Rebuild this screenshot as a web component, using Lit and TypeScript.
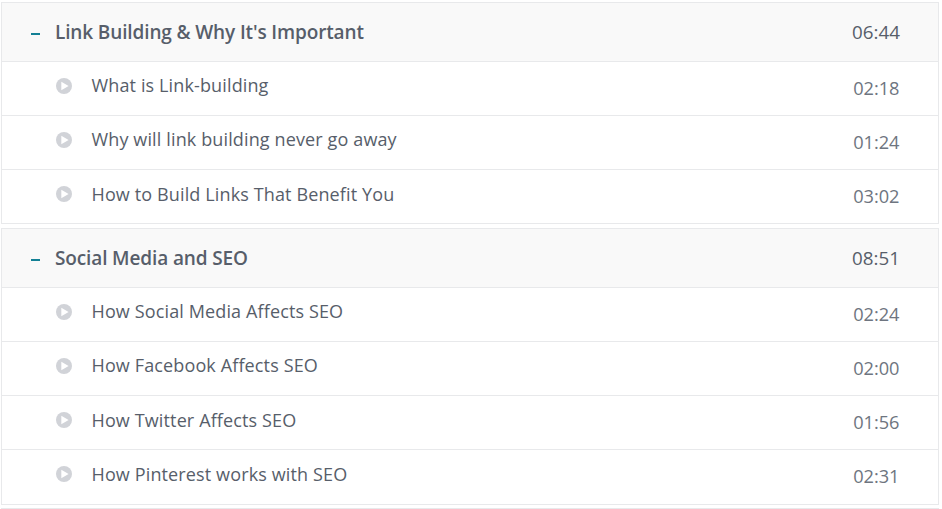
import { LitElement, html, css } from "lit";
import { customElement } from "lit/decorators.js";

const sections = [
  { title: "Link Building & Why It's Important", time: "06:44", items: [["What is Link-building", "02:18"], ["Why will link building never go away", "01:24"], ["How to Build Links That Benefit You", "03:02"]] },
  { title: "Social Media and SEO", time: "08:51", items: [["How Social Media Affects SEO", "02:24"], ["How Facebook Affects SEO", "02:00"], ["How Twitter Affects SEO", "01:56"], ["How Pinterest works with SEO", "02:31"]] },
];

@customElement("app-root")
export class AppRoot extends LitElement {
  static styles = css`
    :host { display: block; height: 509px; overflow: hidden; background: #fff; padding: 2px 3px 0 1px; box-sizing: border-box; font-family: "Open Sans", sans-serif; font-size: 18px; line-height: 24px; color: #575e6a; }
    .section { border: 1px solid #e8e9eb; margin-bottom: 4px; }
    .section:last-of-type { padding-bottom: 1px; margin-bottom: 3px; }
    .head, .row { display: flex; align-items: center; box-sizing: border-box; }
    .head { height: 58px; background: #f9f9f9; padding: 0 38px 0 29px; }
    .minus { width: 9px; height: 2px; background: #138095; margin: 3px 15px 0 0; }
    .title { flex: 1; white-space: nowrap; }
    .head .title { font-weight: 600; font-size: 19px; letter-spacing: -0.13px; }
    .head .time { font-weight: 400; font-size: 18.8px; }
    .row { height: 54px; border-top: 1px solid #e8e9eb; padding: 0 38.5px 0 54px; font-weight: 400; }
    .row svg { width: 16px; height: 16px; margin: 0 19.5px 5px 0; }
    .row .title { padding-bottom: 7px; letter-spacing: 0.13px; }
    .row:nth-child(n + 4) .title { padding-bottom: 5px; }
    .row .time { color: #6e7580; padding-bottom: 2px; font-size: 18.2px; }
    .next { border-top: 1px solid #e8e9eb; }
  `;
  render() {
    return html`${sections.map((s) => html`<section class="section">
      <div class="head"><span class="minus"></span><span class="title">${s.title}</span><span class="time">${s.time}</span></div>
      ${s.items.map(([t, d]) => html`<div class="row">
        <svg viewBox="0 0 16 16"><circle cx="8" cy="8" r="8" fill="#d1d3d8"/><path d="M5.3 3.7L12.6 8L5.3 12.3Z" fill="#fff"/></svg>
        <span class="title">${t}</span><span class="time">${d}</span></div>`)}
    </section>`)}<div class="next"></div>`;
  }
}
